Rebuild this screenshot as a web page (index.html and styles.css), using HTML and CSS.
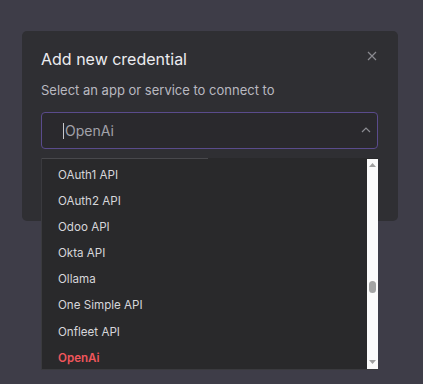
FILE: index.html
```html
<!DOCTYPE html>
<html>
<head>
<meta charset="utf-8">
<link rel="stylesheet" href="styles.css">
</head>
<body>
<div class="modal">
  <div class="header">
    <h1 class="title">Add new credential</h1>
    <svg class="close" width="10" height="10" viewBox="0 0 10 10"><path d="M1 1 L9 9 M9 1 L1 9" stroke="#8a8a90" stroke-width="1.2" fill="none"/></svg>
  </div>
  <p class="subtitle">Select an app or service to connect to</p>
  <div class="select">
    <span class="caret"></span>
    <span class="value">OpenAi</span>
    <svg class="chevron" width="10" height="6" viewBox="0 0 10 6"><path d="M1 5 L5 1 L9 5" stroke="#8c8c92" stroke-width="1.2" fill="none"/></svg>
  </div>
</div>
<div class="dropdown">
  <div class="topline"></div>
  <ul class="list">
    <li class="item">OAuth1 API</li>
    <li class="item">OAuth2 API</li>
    <li class="item">Odoo API</li>
    <li class="item">Okta API</li>
    <li class="item">Ollama</li>
    <li class="item">One Simple API</li>
    <li class="item">Onfleet API</li>
    <li class="item selected">OpenAi</li>
  </ul>
  <div class="scrollbar">
    <svg class="arrow" width="7" height="4" viewBox="0 0 7 4"><path d="M0 4 L3.5 0 L7 4 Z" fill="#a0a0a0"/></svg>
    <div class="track"><div class="thumb"></div></div>
    <svg class="arrow" width="7" height="4" viewBox="0 0 7 4"><path d="M0 0 L3.5 4 L7 0 Z" fill="#a0a0a0"/></svg>
  </div>
</div>
</body>
</html>
```

FILE: styles.css
```css
* { box-sizing: border-box; }
html, body {
  margin: 0;
  padding: 0;
}
body {
  width: 423px;
  height: 384px;
  background: #3e3d48;
  font-family: Inter, "Noto Sans", sans-serif;
  overflow: hidden;
  position: relative;
}
.modal {
  margin: 31px 0 0 22px;
  width: 376px;
  height: 190px;
  background: #2f2f33;
  border-radius: 5px;
  padding: 17px 20px 0 19px;
}
.header {
  display: flex;
  justify-content: space-between;
  align-items: center;
  height: 22px;
}
.title {
  margin: 0;
  font-size: 16px;
  font-weight: 400;
  color: #ececf0;
  line-height: 22px;
}
.close {
  margin-right: 1px;
  margin-top: -7px;
}
.subtitle {
  margin: 11px 0 0 0;
  font-size: 13px;
  line-height: 18px;
  color: #b9b9c0;
}
.select {
  margin-top: 13px;
  height: 37px;
  border: 1px solid #5a4b8c;
  border-radius: 4px;
  background: #2a292d;
  display: flex;
  align-items: center;
  padding-left: 21px;
  padding-right: 6px;
}
.caret {
  width: 1px;
  height: 16px;
  background: #c8c8cc;
  margin-right: 1px;
}
.value {
  flex: 1;
  font-size: 14px;
  color: #a2a2aa;
}
.chevron {
  margin-top: -1px;
}
.dropdown {
  position: absolute;
  left: 41px;
  top: 158px;
  width: 337px;
  height: 212px;
  background: #29292b;
  border-left: 1px solid #3a3a3e;
  border-bottom: 1px solid #3a3a3e;
  display: flex;
}
.topline {
  position: absolute;
  left: 0;
  top: 0;
  width: 166px;
  height: 1px;
  background: #48484c;
}
.list {
  list-style: none;
  margin: 0;
  padding: 4px 0 0 0;
  flex: 1;
  overflow: hidden;
}
.item {
  height: 26.1px;
  line-height: 26px;
  padding-left: 16px;
  font-size: 11.6px;
  color: #d6d6da;
}
.item.selected {
  color: #f0565b;
  font-weight: 600;
}
.scrollbar {
  width: 11px;
  margin-top: 1px;
  background: #fbfbfb;
  display: flex;
  flex-direction: column;
  align-items: center;
  padding: 4px 0 5px;
}
.track {
  flex: 1;
  width: 100%;
  position: relative;
}
.thumb {
  position: absolute;
  left: 2px;
  top: 114px;
  width: 7px;
  height: 12px;
  border-radius: 4px;
  background: #a4a4a4;
}
```
